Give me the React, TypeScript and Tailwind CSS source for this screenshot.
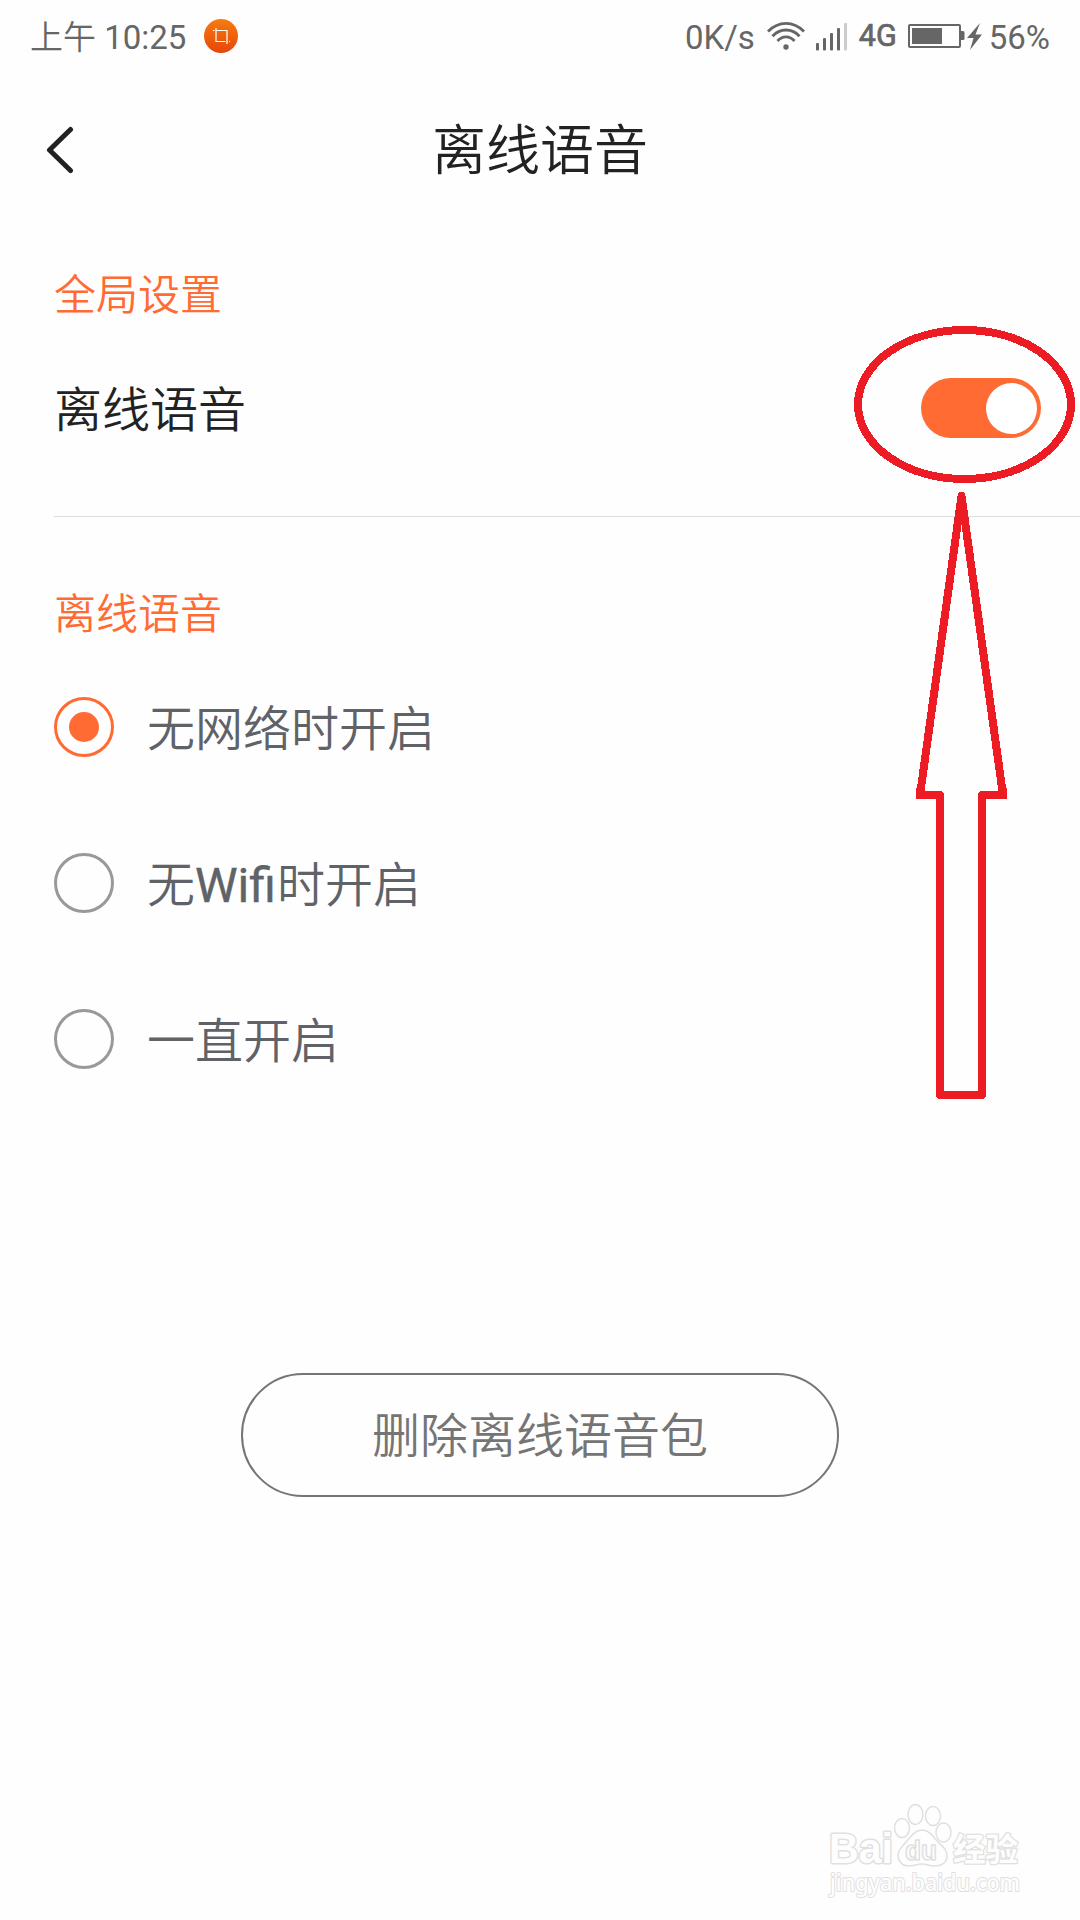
import React, { useState } from 'react';

const StatusBar: React.FC = () => (
  <div className="flex h-[72px] items-center justify-between pl-[30px] pr-[30px] text-[33px] leading-[48px] text-[#666666]">
    <div className="flex items-center">
      <span className="whitespace-pre pt-[3px]">
        <span className="font-[350]">上午</span> 10:25
      </span>
      <svg className="ml-[18px] h-[34px] w-[34px]" viewBox="0 0 34 34" fill="none">
        <defs>
          <linearGradient id="crop" x1="0" y1="0" x2="0" y2="1">
            <stop offset="0" stopColor="#f57c10" />
            <stop offset="1" stopColor="#e6460a" />
          </linearGradient>
        </defs>
        <circle cx="17" cy="17" r="17" fill="url(#crop)" />
        <path d="M9 11.5h1.5M12 9v13.5h9.5M12.5 11.5H23V25M25 22.500h1" stroke="#fff" strokeWidth="1.2" />
      </svg>
    </div>
    <div className="flex items-center">
      <span className="pt-[3px]">0K/s</span>
      <svg className="ml-3 h-7 w-[38px]" viewBox="0 0 38 28" fill="none" stroke="#666" strokeWidth="2.800">
        <path d="M1 9.500Q9 1.400 19 1.400T37 9.500" />
        <path d="M5.500 14.200Q11 8 19 8T32.500 14.200" />
        <path d="M10.500 19Q14 14.800 19 14.800T27.500 19" />
        <circle cx="19" cy="25" r="2.700" fill="#666" stroke="none" />
      </svg>
      <svg className="ml-[11px] mt-[2px] h-7 w-[31px]" viewBox="0 0 31 28" fill="#666">
        <rect x="0" y="20" width="3" height="7.500" rx="1" />
        <rect x="7" y="15" width="3" height="12.500" rx="1" />
        <rect x="14" y="10" width="3" height="17.500" rx="1" />
        <rect x="21" y="5" width="3" height="22.500" rx="1" />
        <rect x="28" y="0" width="3" height="27.500" rx="1" fill="#ccc" />
      </svg>
      <span className="ml-3 text-[30.5px] [-webkit-text-stroke:0.7px_#666666]">4G</span>
      <svg className="ml-[11px] h-7 w-[75px]" viewBox="0 0 75 28" fill="#666">
        <rect x="1" y="3" width="51" height="22" rx="1" fill="none" stroke="#666" strokeWidth="2" />
        <rect x="4" y="6" width="30" height="16" />
        <path d="M53 9h2q1.500 0 1.500 1.500v6q0 1.500-1.500 1.500h-2z" />
        <path d="M72 1L59 16h6.500L62 28L74 12.500H67.500z" />
      </svg>
      <span className="ml-[6px] pt-[3px]">56%</span>
    </div>
  </div>
);

interface RadioRowProps {
  label: React.ReactNode;
  checked: boolean;
  onSelect: () => void;
}

const RadioRow: React.FC<RadioRowProps> = ({ label, checked, onSelect }) => (
  <button onClick={onSelect} className="flex h-[156px] w-full items-center text-left">
    <span
      className={`flex h-[60px] w-[60px] items-center justify-center rounded-full border-[3px] ${
        checked ? 'border-[#ff6b33]' : 'border-[#999999]'
      }`}
    >
      {checked && <span className="h-[30px] w-[30px] rounded-full bg-[#ff6b33]" />}
    </span>
    <span className="ml-[33px] pt-[5px] text-[48px] leading-[72px] text-[#5f6368] font-[350]">{label}</span>
  </button>
);

const Annotation: React.FC = () => (
  <svg
    className="pointer-events-none absolute left-0 top-0 h-[1920px] w-[1080px]"
    viewBox="0 0 1080 1920"
    fill="none"
    stroke="#ed1c24"
    strokeWidth="8"
    strokeLinejoin="round"
    shapeRendering="crispEdges"
  >
    <ellipse cx="964.5" cy="404.5" rx="106.500" ry="74.500" />
    <path d="M961.500 496L1003 795H982V1095H940V795H920Z" />
    <path d="M920 788V795H938M1003 788V795H984" strokeLinejoin="miter" />
  </svg>
);

const Watermark: React.FC = () => (
  <svg
    className="pointer-events-none absolute left-[810px] top-[1790px] h-[130px] w-[240px]"
    viewBox="810 1790 240 130"
    fill="#fefefe"
    stroke="#e0e0e0"
    strokeWidth="1.500"
    strokeLinejoin="round"
    fontFamily="'Liberation Sans', 'Noto Sans CJK SC', sans-serif"
    fontWeight="bold"
  >
    <text x="829" y="1863" fontSize="43" strokeWidth="3" paintOrder="stroke" textLength="64" lengthAdjust="spacingAndGlyphs">Bai</text>
    <ellipse cx="902" cy="1828" rx="7.500" ry="9.500" />
    <ellipse cx="915.500" cy="1814.500" rx="7.500" ry="10" />
    <ellipse cx="933" cy="1816" rx="7.500" ry="9.500" />
    <ellipse cx="943.500" cy="1832.500" rx="7.500" ry="9.500" />
    <path d="M922 1830C929 1830 933 1836 937 1841C942 1846 947 1849 947 1856C947 1863 941 1866 935 1866C929 1866 927 1864 922 1864C917 1864 914 1866 908 1866C902 1866 898 1861 898 1855C898 1849 903 1846 907 1841C911 1836 915 1830 922 1830Z" />
    <text x="905" y="1860" fontSize="27" textLength="32" lengthAdjust="spacingAndGlyphs">du</text>
    <text x="953" y="1861" fontSize="32" strokeWidth="2.500" paintOrder="stroke" textLength="65" lengthAdjust="spacingAndGlyphs">经验</text>
    <text x="830" y="1891" fontSize="23" fontFamily="'Noto Sans', sans-serif" fontWeight="500" strokeWidth="2" paintOrder="stroke" textLength="190" lengthAdjust="spacingAndGlyphs">jingyan.baidu.com</text>
  </svg>
);

const options = [
  <>无网络时开启</>,
  <>
    无<span className="pr-px font-normal [-webkit-text-stroke:0.4px_#5f6368]">Wifi</span>时开启
  </>,
  <>一直开启</>,
];

const App: React.FC = () => {
  const [enabled, setEnabled] = useState(true);
  const [selected, setSelected] = useState(0);

  return (
    <div className="relative h-[1920px] w-[1080px] overflow-hidden bg-[#fefefe] font-[Roboto,'Noto_Sans_CJK_SC',sans-serif] text-[#222222]">
      <StatusBar />

      <header className="flex h-[156px] items-center px-[46px]">
        <button className="w-7">
          <svg className="h-12 w-7" viewBox="0 0 28 48" fill="none" stroke="#222" strokeWidth="5" strokeLinecap="round" strokeLinejoin="round">
            <path d="M24.500 3.500L3.500 24L24.500 44.500" />
          </svg>
        </button>
        <h1 className="flex-1 pt-[4px] pr-7 text-center text-[54px] leading-[80px] font-[350]">离线语音</h1>
      </header>

      <section className="pl-[54px]">
        <h2 className="pt-[37px] pb-px text-[42px] leading-[62px] text-[#ff6b33] font-[350]">全局设置</h2>
        <div className="flex h-[189px] items-center justify-between border-b border-[#dddddd] pb-[28px] pr-[39px]">
          <span className="pt-[5px] text-[48px] leading-[72px] font-[350]">离线语音</span>
          <button
            onClick={() => setEnabled(!enabled)}
            className={`flex h-[60px] w-[120px] items-center rounded-full px-[4.5px] ${
              enabled ? 'justify-end bg-[#ff6b33]' : 'justify-start bg-[#cccccc]'
            }`}
          >
            <span className="h-[51px] w-[51px] rounded-full bg-white" />
          </button>
        </div>
      </section>

      <section className="pl-[54px]">
        <h2 className="pt-[67px] pb-[3px] text-[42px] leading-[62px] text-[#ff6b33] font-[350]">离线语音</h2>
        {options.map((label, i) => (
          <RadioRow key={i} label={label} checked={selected === i} onSelect={() => setSelected(i)} />
        ))}
      </section>

      <button className="mx-auto mt-[256px] flex h-[124px] w-[598px] items-center justify-center rounded-full border-2 border-[#757575] pt-[3px] text-[48px] leading-[72px] text-[#757575] font-[350]">
        删除离线语音包
      </button>

      <Annotation />
      <Watermark />
    </div>
  );
};

export default App;
